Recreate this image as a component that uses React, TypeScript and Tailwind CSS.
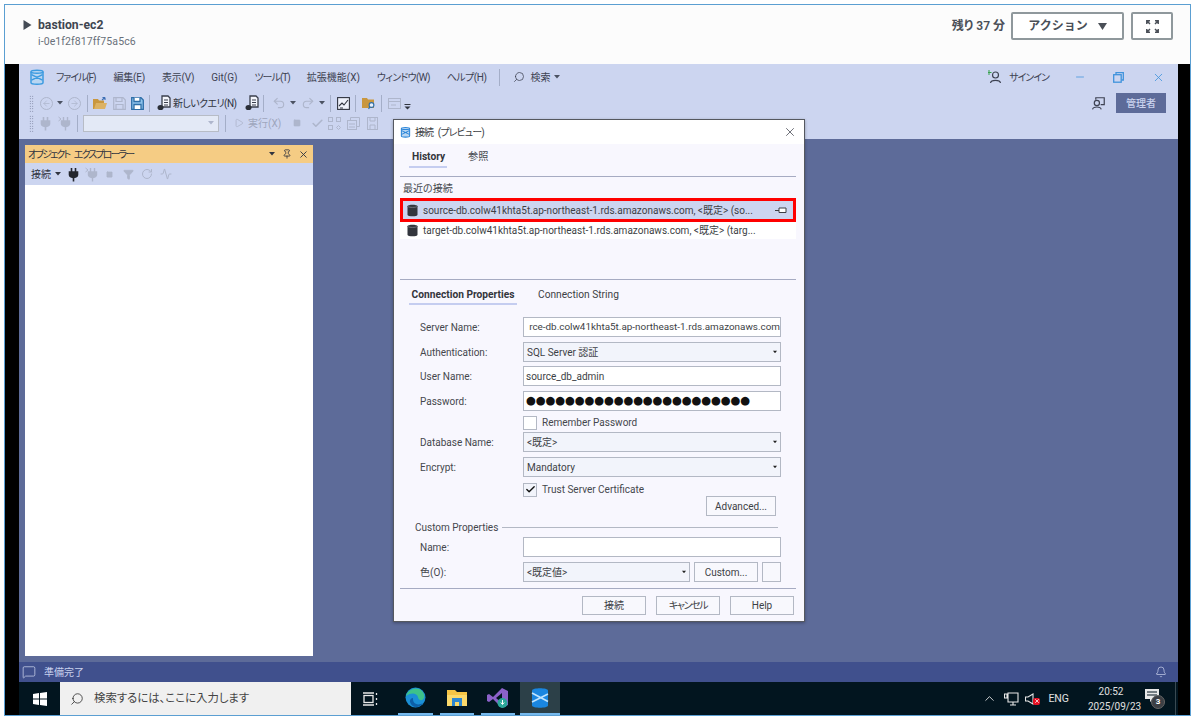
import React from "react";
import { ChevronUp, Search, X, Minus, Check, Bell, MessageSquare, Pin, RotateCw, Filter, Activity, Undo2, Redo2, Square, Play, ArrowLeft, ArrowRight } from "lucide-react";

const Logo = ({ s = 16, c = "#3d9be0" }: { s?: number; c?: string }) => (
  <svg width={s} height={s * 1.15} viewBox="0 0 16 18" fill="none">
    <path d="M2 3.5C2 1.5 14 1.5 14 3.5V14.5C14 16.5 2 16.5 2 14.5Z" stroke={c} strokeWidth="1.5" fill="#b9d6f2" />
    <path d="M2 3.5C2 5.5 14 5.5 14 3.5M2.5 6.5L13.5 12M13.5 6.5L2.5 12" stroke={c} strokeWidth="1.5" />
  </svg>
);
const Caret = ({ c = "#4b5262" }: { c?: string }) => (
  <svg width="6" height="4" viewBox="0 0 6 4" className="shrink-0"><path d="M0 0H6L3 3.5Z" fill={c} /></svg>
);
const Grip = () => (
  <div className="w-[5px] h-[17px] shrink-0 bg-[radial-gradient(#6a7290_0.7px,transparent_0.8px)] bg-[length:2.5px_2.5px]" />
);
const Sep = ({ ml }: { ml: string }) => <div className={`${ml} w-px h-[17px] bg-[#a4aec8] shrink-0`} />;
const Plug = ({ c }: { c: string }) => (
  <svg width="11" height="15" viewBox="0 0 11 15" fill="none" stroke={c} strokeWidth="1.6">
    <path d="M3.5 1V5M7.5 1V5" /><path d="M1.5 5H9.5V8C9.5 9.5 7 10.5 5.5 10.5S1.5 9.5 1.5 8Z" fill={c} /><path d="M5.5 10.5V14.5" />
  </svg>
);
const PlugX = () => (
  <svg width="13" height="15" viewBox="0 0 13 15" fill="none" stroke="#aeb6cc" strokeWidth="1.4">
    <path d="M0.5 1L3 3L0.5 5" strokeWidth="1" />
    <path d="M5.500 1V5M9.500 1V5" /><path d="M3.500 5H11.500V8C11.500 9.5 9 10.500 7.500 10.500S3.500 9.5 3.500 8Z" fill="#aeb6cc" /><path d="M7.500 10.500V14.500" />
  </svg>
);
const Doc = () => (
  <svg width="14" height="16" viewBox="0 0 14 16" fill="none">
    <path d="M5 1H11L13 3V12H5Z" fill="#f4f6fc" stroke="#3a3f4c" strokeWidth="1.3" />
    <path d="M7 5H11M7 7.5H11M7 10H11" stroke="#3a3f4c" />
    <ellipse cx="3.5" cy="12.5" rx="3" ry="2.6" fill="#2b2f38" />
  </svg>
);
const Db = () => (
  <svg width="11" height="13" viewBox="0 0 11 13" className="shrink-0">
    <path d="M0.5 2.2C0.5 0.2 10.5 0.2 10.5 2.2V10.8C10.5 12.8 0.5 12.8 0.5 10.8Z" fill="#33363d" />
    <path d="M1 2.5C2 3.7 9 3.7 10 2.5" stroke="#8a8d96" strokeWidth="0.7" fill="none" />
  </svg>
);
const Field = ({ children, cls = "" }: { children?: React.ReactNode; cls?: string }) => (
  <div className={`h-5 w-[258px] border border-[#b3b8c4] bg-white flex items-center overflow-hidden whitespace-nowrap pl-[2px] text-[10px] text-[#3d3f45] ${cls}`}>{children}</div>
);
const Select = ({ children, w = "w-[258px]" }: { children: React.ReactNode; w?: string }) => (
  <div className={`${w} h-5 border border-[#b3b8c4] bg-[#f2f4fb] flex items-center justify-between pl-[3px] pr-[2px] text-[10px] text-[#3d3f45]`}>
    <span>{children}</span><div className="scale-75"><Caret c="#222" /></div>
  </div>
);
const Row = ({ label, children, mt }: { label: string; children: React.ReactNode; mt: string }) => (
  <div className={`flex items-center ${mt}`}>
    <div className="w-[104px] pl-[1px] text-[10px] text-[#45474d]">{label}</div>
    {children}
  </div>
);
const Btn = ({ children, w, cls = "" }: { children: React.ReactNode; w: string; cls?: string }) => (
  <div className={`${w} h-[19px] border border-[#b3b8c4] bg-[#f8f8fd] flex items-center justify-center text-[10px] text-[#3d3f45] ${cls}`}>{children}</div>
);
const Menu = ({ t, ml, tr = "" }: { t: string; ml: string; tr?: string }) => <span className={`${ml} ${tr} text-[10px] text-[#3d4252] whitespace-nowrap`}>{t}</span>;

export default function App() {
  return (
    <div className="w-[1194px] h-[720px] bg-white pt-[4px] pl-[4px] pr-[3px] pb-[4px] overflow-hidden font-['Roboto','Noto_Sans_CJK_JP',sans-serif] [font-feature-settings:'palt']">
      <div className="h-full border border-[#5b9fd2] flex flex-col">
        {/* Session header */}
        <div className="h-[59px] shrink-0 bg-[#fcfcfc] flex items-start justify-between pl-[18px] pr-[17px]">
          <div className="flex items-start pt-[12px]">
            <svg width="9" height="10" viewBox="0 0 9 10" className="mt-[3px]"><path d="M0.5 0L8.5 5L0.5 10Z" fill="#444b55" /></svg>
            <div className="ml-[6px]">
              <div className="text-[12.2px] leading-[17px] font-bold text-[#3f4650]">bastion-ec2</div>
              <div className="text-[10.5px] leading-[14px] mt-[1px] text-[#69707a] tracking-[0.1px]">i-0e1f2f817ff75a5c6</div>
            </div>
          </div>
          <div className="flex items-center pt-[7px]">
            <span className="text-[12px] font-semibold text-[#4a4f57]">残り 37 分</span>
            <div className="ml-[6px] w-[113px] h-[28px] border-2 border-[#8f989c] rounded-[2px] bg-white flex items-center justify-center gap-[10px] text-[12px] font-semibold text-[#4a4f57] [font-feature-settings:normal]">
              アクション
              <svg width="9" height="7" viewBox="0 0 9 7"><path d="M0 0H9L4.5 7Z" fill="#4a4f57" /></svg>
            </div>
            <div className="ml-[7px] w-[42px] h-[28px] border-2 border-[#8f989c] rounded-[2px] bg-white flex items-center justify-center">
              <svg width="13" height="13" viewBox="0 0 13 13" fill="none" stroke="#4a4f57" strokeWidth="1.5">
                <path d="M0.8 4V0.8H4M9 0.8H12.200V4M12.200 9V12.200H9M4 12.200H0.8V9M1 1L4 4M12 1L9 4M12 12L9 9M1 12L4 9" />
              </svg>
            </div>
          </div>
        </div>

        {/* Remote desktop */}
        <div className="flex-1 min-h-0 bg-black pl-[14px] pr-[12px] flex flex-col">
          <div className="relative flex-1 min-h-0 flex flex-col bg-[#5d6b99]">
            {/* menu bar */}
            <div className="bg-[#ccd5f0] shrink-0 pb-[6px]">
              <div className="h-[26px] flex items-center pl-[10px] pr-[13px]">
                <Logo s={16} />
                <Menu t="ファイル(F)" ml="ml-[11px]" tr="tracking-[-1.1px]" />
                <Menu t="編集(E)" ml="ml-[18px]" tr="tracking-[-0.2px]" />
                <Menu t="表示(V)" ml="ml-[17px]" tr="tracking-[-0.2px]" />
                <Menu t="Git(G)" ml="ml-[17px]" />
                <Menu t="ツール(T)" ml="ml-[17px]" tr="tracking-[-1px]" />
                <Menu t="拡張機能(X)" ml="ml-[17px]" />
                <Menu t="ウィンドウ(W)" ml="ml-[17px]" tr="tracking-[-0.7px]" />
                <Menu t="ヘルプ(H)" ml="ml-[17px]" tr="tracking-[-0.5px]" />
                <div className="ml-[13px] w-px h-[17px] bg-[#a4aec8]" />
                <Search size={12} strokeWidth={1.5} color="#3d4252" className="ml-[13px] -scale-x-100" />
                <Menu t="検索" ml="ml-[5px]" />
                <div className="ml-[4px]"><Caret /></div>
                <div className="ml-auto flex items-center">
                  <svg width="14" height="14" viewBox="0 0 14 14" fill="none">
                    <path d="M1 0V5M-1 2.5H3.5" stroke="#35a04b" strokeWidth="1" />
                    <circle cx="7.5" cy="5" r="3" stroke="#3d4252" strokeWidth="1.2" />
                    <path d="M2.5 13C3 9.5 12 9.5 12.5 13" stroke="#3d4252" strokeWidth="1.2" />
                  </svg>
                  <span className="ml-[7px] text-[10px] tracking-[-1px] text-[#3d4252]">サインイン</span>
                  <Minus size={12} color="#3f93dc" strokeWidth={1.5} className="ml-[25px]" />
                  <svg width="11" height="11" viewBox="0 0 11 11" fill="none" stroke="#3f93dc" strokeWidth="1.3" className="ml-[27px]">
                    <rect x="0.7" y="2.7" width="7.5" height="7.5" /><path d="M3 2.5V0.7H10.3V8H8.5" />
                  </svg>
                  <X size={13} color="#3f93dc" strokeWidth={1.5} className="ml-[28px]" />
                </div>
              </div>
              {/* toolbar 1 */}
              <div className="h-[20px] mt-[3px] flex items-center pl-[10px] pr-[12px]">
                <Grip />
                <div className="ml-[6px] w-[13px] h-[13px] rounded-full border border-[#aeb6cc] flex items-center justify-center"><ArrowLeft size={9} color="#aeb6cc" /></div>
                <div className="ml-[4px]"><Caret /></div>
                <div className="ml-[5px] w-[13px] h-[13px] rounded-full border border-[#aeb6cc] flex items-center justify-center"><ArrowRight size={9} color="#aeb6cc" /></div>
                <Sep ml="ml-[6px]" />
                <svg width="14" height="13" viewBox="0 0 14 13" className="ml-[5px]"><path d="M0 2H5L6 3.5H11V12H0Z" fill="#c9973f" /><path d="M1 12L3 6H14L12 12Z" fill="#dcb264" /><path d="M9 3L12 0.5M12 0.5H9.5M12 .5V3" stroke="#3d6fb4" strokeWidth="1.1" fill="none" /></svg>
                <svg width="13" height="13" viewBox="0 0 13 13" fill="none" stroke="#aeb6cc" strokeWidth="1.2" className="ml-[6px]"><path d="M0.7 0.7H10L12.3 3V12.3H0.7Z" /><path d="M3 .7V4.5H9V.7M3 12V7.5H10V12" /></svg>
                <svg width="13" height="13" viewBox="0 0 13 13" fill="#8ec3ec" stroke="#2e6ea8" strokeWidth="1.3" className="ml-[5px]"><path d="M0.7 0.7H10L12.3 3V12.3H0.7Z" /><path d="M3 .7V4.5H9V.7M3 12V7.5H10V12" fill="#fff" /></svg>
                <Sep ml="ml-[5px]" />
                <div className="ml-[7px]"><Doc /></div>
                <span className="ml-[2px] w-[62px] text-[10px] tracking-[-0.6px] text-[#30343f] whitespace-nowrap">新しいクエリ(N)</span>
                <div className="ml-[10px]"><Doc /></div>
                <Sep ml="ml-[4px]" />
                <Undo2 size={14} color="#aeb6cc" className="ml-[8px]" />
                <div className="ml-[4px]"><Caret /></div>
                <Redo2 size={14} color="#aeb6cc" className="ml-[5px]" />
                <div className="ml-[4px]"><Caret /></div>
                <Sep ml="ml-[5px]" />
                <svg width="13" height="13" viewBox="0 0 13 13" fill="none" stroke="#30343f" strokeWidth="1.1" className="ml-[6px]"><rect x="0.6" y="0.6" width="11.8" height="11.8" fill="#eef1fb" /><path d="M2 9L5 6L7 8L11 3M3 11H6" /></svg>
                <Sep ml="ml-[5px]" />
                <svg width="14" height="13" viewBox="0 0 14 13" className="ml-[6px]"><path d="M0 1H5L6 2.5H12V11H0Z" fill="#c9973f" /><circle cx="9.5" cy="8" r="2.4" fill="#e9f0fb" stroke="#2e6ea8" strokeWidth="1.1" /><path d="M8 10L6.5 12" stroke="#2e6ea8" strokeWidth="1.2" /></svg>
                <Sep ml="ml-[5px]" />
                <svg width="13" height="13" viewBox="0 0 13 13" fill="none" stroke="#aeb6cc" className="ml-[6px]"><rect x="0.5" y="1.5" width="12" height="10" /><path d="M0.5 4.5H12.5M3 8H8" /></svg>
                <svg width="7" height="6" viewBox="0 0 7 6" className="ml-[3px] mt-[8px]"><path d="M0.5 0.5H6.5" stroke="#30343f" /><path d="M0.5 2.500H6.500L3.500 5.500Z" fill="#30343f" /></svg>
                <div className="ml-auto flex items-center">
                  <svg width="13" height="13" viewBox="0 0 12 12" fill="none" stroke="#3d4252" strokeWidth="1.1"><circle cx="4.5" cy="5.5" r="2.4" /><path d="M0.5 11.5C1 8.5 8 8.5 8.5 11.5M3.5 2.5V.7H11.3V7H8" /></svg>
                  <div className="ml-[11px] w-[50px] h-[20px] bg-[#5d6b99] text-[#c9d2ee] text-[10px] font-medium flex items-center justify-center">管理者</div>
                </div>
              </div>
              {/* toolbar 2 */}
              <div className="h-[20px] flex items-center pl-[10px]">
                <Grip />
                <div className="ml-[6px]"><Plug c="#aeb6cc" /></div>
                <div className="ml-[7px]"><PlugX /></div>
                <Sep ml="ml-[6px]" />
                <div className="ml-[5px] w-[136px] h-[17px] border border-[#b7bcc6] bg-[#e3e9f6] flex items-center justify-end pr-[4px]"><Caret c="#aeb6cc" /></div>
                <Sep ml="ml-[6px]" />
                <Play size={10} color="#aeb6cc" className="ml-[8px]" />
                <span className="ml-[4px] w-[32px] text-[10px] text-[#9ea6bd] whitespace-nowrap">実行(X)</span>
                <Square size={8} fill="#aeb6cc" color="#aeb6cc" className="ml-[13px]" />
                <Check size={13} color="#aeb6cc" strokeWidth={3} className="ml-[10px]" />
                <svg width="13" height="13" viewBox="0 0 13 13" fill="none" stroke="#aeb6cc" className="ml-[4px]"><rect x="0.5" y="0.5" width="4" height="4" /><rect x="8.5" y="0.5" width="4" height="4" /><rect x="0.5" y="8.5" width="4" height="4" /><path d="M8.5 10.5L10.5 8.5L12.5 10.5L10.5 12.5Z" /></svg>
                <svg width="13" height="13" viewBox="0 0 13 13" fill="none" stroke="#aeb6cc" className="ml-[6px]"><rect x="0.5" y="3.5" width="9" height="9" /><path d="M3.5 3.5V.5H12.5V9.5H9.5M2 7H8M2 10H8" /></svg>
                <svg width="11" height="13" viewBox="0 0 11 13" fill="none" stroke="#aeb6cc" className="ml-[7px]"><rect x="0.5" y="0.5" width="10" height="12" /><path d="M3 .5V4H8V.5M3 12V8H8V12" /></svg>
              </div>
            </div>

            {/* document area */}
            <div className="flex-1 min-h-0 pl-[6px] pt-[6px] pb-[6px]">
              <div className="w-[288px] h-full flex flex-col">
                <div className="h-[18px] shrink-0 bg-[#f5cc84] flex items-center pl-[3px] pr-[4px] text-[10px] text-[#30343f]">
                  <span className="tracking-[-1.9px] [word-spacing:4px]">オブジェクト エクスプローラー</span>
                  <div className="ml-auto"><Caret c="#30343f" /></div>
                  <Pin size={10} color="#30343f" className="ml-[7px]" />
                  <X size={11} color="#30343f" className="ml-[6px]" />
                </div>
                <div className="h-[22px] shrink-0 bg-[#ccd5f0] flex items-center pl-[6px]">
                  <span className="text-[10px] text-[#30343f]">接続</span>
                  <div className="ml-[4px]"><Caret c="#30343f" /></div>
                  <div className="ml-[7px]"><Plug c="#23262e" /></div>
                  <div className="ml-[6px]"><PlugX /></div>
                  <Square size={7} fill="#aeb6cc" color="#aeb6cc" className="ml-[8px]" />
                  <Filter size={11} fill="#aeb6cc" color="#aeb6cc" className="ml-[10px]" />
                  <RotateCw size={12} color="#aeb6cc" className="ml-[7px]" />
                  <Activity size={12} color="#aeb6cc" className="ml-[7px]" />
                </div>
                <div className="flex-1 bg-white" />
              </div>
            </div>

            {/* status bar */}
            <div className="h-[20px] shrink-0 bg-[#40508d] flex items-center pl-[3px] pr-[11px]">
              <MessageSquare size={14} color="#d5dcf2" strokeWidth={1.2} />
              <span className="ml-[8px] text-[10px] text-[#c9d2ee]">準備完了</span>
              <Bell size={12} color="#d5dcf2" strokeWidth={1.3} className="ml-auto" />
            </div>

            {/* Connect dialog */}
            <div className="absolute left-[374px] top-[55px] w-[412px] h-[503px] bg-[#f8f7fe] border border-[#55585f] flex flex-col shadow-[0_1px_3px_rgba(0,0,0,0.3)]">
              <div className="h-[24px] shrink-0 bg-white flex items-center pl-[6px] pr-[7px]">
                <Logo s={11} c="#2c86d8" />
                <span className="ml-[4px] text-[10px] tracking-[-0.9px] [word-spacing:3px] text-[#3d3f45]">接続 (プレビュー)</span>
                <X size={14} strokeWidth={1.2} color="#30343f" className="ml-auto" />
              </div>
              <div className="h-[33px] shrink-0 ml-[6px] mr-[8px] border-b border-[#a6abc2] flex items-start pl-[9px] pt-[5px] gap-[21px] text-[10.2px] text-[#45474d]">
                <div className="font-bold text-[#33353b] w-[38px] h-[24px] leading-[15px]"><span className="pl-[3px]">History</span><div className="h-[2px] w-[38px] bg-[#c5cdf0] mt-[2px]" /></div>
                <span className="leading-[15px]">参照</span>
              </div>
              <div className="pl-[9px] mt-[5px] text-[10px] leading-[14px] text-[#45474d]">最近の接続</div>
              <div className="ml-[6px] mr-[8px] mt-[2px] h-[24px] border-[3px] border-[#f00] bg-[#ccd5f0] flex items-center pl-[4px] pr-[6px] text-[10px] text-[#3d3f45] whitespace-nowrap">
                <Db />
                <span className="ml-[5px]">source-db.colw41khta5t.ap-northeast-1.rds.amazonaws.com, &lt;既定&gt; (so...</span>
                <svg width="12" height="7" viewBox="0 0 12 7" className="ml-auto"><path d="M0 3.5H4M4 1H11V5.5H4Z" stroke="#3d3f45" fill="#fff" /></svg>
              </div>
              <div className="ml-[6px] mr-[8px] h-[17px] bg-white flex items-center pl-[7px] text-[10px] text-[#3d3f45] whitespace-nowrap">
                <Db />
                <span className="ml-[5px]">target-db.colw41khta5t.ap-northeast-1.rds.amazonaws.com, &lt;既定&gt; (targ...</span>
              </div>
              <div className="ml-[6px] mr-[8px] mt-[40px] h-px bg-[#a6abc2] shrink-0" />
              <div className="ml-[15px] mt-[7px] flex items-start gap-[21px] text-[10.2px] leading-[15px]">
                <div className="w-[108px] font-bold text-[#33353b] text-center whitespace-nowrap">Connection Properties<div className="h-[2px] bg-[#c5cdf0] mt-[1px]" /></div>
                <span className="text-[#3d3f45]">Connection String</span>
              </div>
              <div className="pl-[25px] mt-[12px]">
                <Row label="Server Name:" mt="">
                  <Field cls="justify-end"><span className="text-[9.9px]">rce-db.colw41khta5t.ap-northeast-1.rds.amazonaws.com</span></Field>
                </Row>
                <Row label="Authentication:" mt="mt-[5px]"><Select>SQL Server 認証</Select></Row>
                <Row label="User Name:" mt="mt-[4px]"><Field>source_db_admin</Field></Row>
                <Row label="Password:" mt="mt-[5px]">
                  <Field><span className="text-[11.4px] leading-none text-[#111] tracking-[-0.2px] font-['DejaVu_Sans',sans-serif]">●●●●●●●●●●●●●●●●●●●●●●●</span></Field>
                </Row>
                <div className="flex items-center mt-[4px] ml-[104px] h-[15px]">
                  <div className="w-[14px] h-[14px] border border-[#b3b8c4] bg-white" />
                  <span className="ml-[5px] text-[10px] text-[#45474d]">Remember Password</span>
                </div>
                <Row label="Database Name:" mt="mt-[2px]"><Select>&lt;既定&gt;</Select></Row>
                <Row label="Encrypt:" mt="mt-[5px]"><Select>Mandatory</Select></Row>
                <div className="flex items-center mt-[5px] ml-[104px] h-[15px]">
                  <div className="w-[14px] h-[14px] border border-[#b3b8c4] bg-[#f2f4fb] flex items-center justify-center"><Check size={11} strokeWidth={3} color="#111" /></div>
                  <span className="ml-[5px] text-[10px] text-[#45474d]">Trust Server Certificate</span>
                </div>
                <div className="flex justify-end pr-[28px] -mt-[1px]"><Btn w="w-[70px]" cls="h-[20px]">Advanced...</Btn></div>
                <div className="flex items-center -ml-[4px] mt-[4px] h-[15px] pr-[26px]">
                  <span className="text-[10px] text-[#45474d] whitespace-nowrap">Custom Properties</span>
                  <div className="ml-[4px] flex-1 h-px bg-[#b3b8c4]" />
                </div>
                <Row label="Name:" mt="mt-[2px]"><Field /></Row>
                <Row label="色(O):" mt="mt-[5px]">
                  <Select w="w-[167px]">&lt;既定値&gt;</Select>
                  <Btn w="w-[64px]" cls="ml-[4px] h-[20px]">Custom...</Btn>
                  <div className="ml-[4px] w-[19px] h-[20px] border border-[#b3b8c4] bg-[#f8f8fd]" />
                </Row>
              </div>
              <div className="ml-[6px] mr-[8px] mt-[6px] h-px bg-[#a6abc2] shrink-0" />
              <div className="flex justify-end gap-[10px] pr-[10px] mt-[7px]">
                <Btn w="w-[64px]" cls="border-[#5a9fd4]">接続</Btn>
                <Btn w="w-[64px]"><span className="tracking-[-1.4px]">キャンセル</span></Btn>
                <Btn w="w-[64px]">Help</Btn>
              </div>
            </div>
          </div>

          {/* Taskbar */}
          <div className="h-[33px] shrink-0 bg-[#02151f] flex items-stretch">
            <div className="w-[41px] flex items-center justify-center">
              <svg width="14" height="14" viewBox="0 0 14 14" fill="#fff"><path d="M0 2L6 1.1V6.6H0ZM7 1L14 0V6.6H7ZM0 7.4H6V12.9L0 12ZM7 7.4H14V14L7 13Z" /></svg>
            </div>
            <div className="w-[291px] bg-[#f0f0f0] flex items-center pl-[10px]">
              <Search size={14} strokeWidth={1.3} color="#222" className="-scale-x-100" />
              <span className="ml-[10px] text-[11.4px] mt-[1px] text-[#444]">検索するには、ここに入力します</span>
            </div>
            <div className="ml-[12px] flex items-center w-[16px]">
              <svg width="15" height="14" viewBox="0 0 15 14" fill="none" stroke="#e8e8e8" strokeWidth="1.3"><rect x="1" y="3.5" width="9" height="7" /><path d="M0 1H11M0 13H11M13.5 1V3M13.5 6V8M13.5 11V13" /></svg>
            </div>
            <div className="ml-[19px] w-[35px] flex items-center justify-center border-b-2 border-[#76b9ed]">
              <svg width="21" height="21" viewBox="0 0 21 21">
                <circle cx="10.5" cy="10.5" r="10" fill="#1b8fd6" />
                <path d="M1 9C3 2 12 -1 17 4C20 7 20 12 17 13C14 14 13 11 13 10C12 6 6 5 1 9Z" fill="#3dc28a" />
                <path d="M8 12C8 17 13 19 18 16C15 21 7 22 5 15C4.500 13 6 11 8 11Z" fill="#0d5fa8" />
              </svg>
            </div>
            <div className="ml-[7px] w-[34px] flex items-center justify-center border-b-2 border-[#76b9ed]">
              <svg width="20" height="18" viewBox="0 0 20 18"><path d="M0 1H8L10 3H20V17H0Z" fill="#f5c445" /><path d="M0 6H20V17H0Z" fill="#fbd96b" /><rect x="5" y="9" width="10" height="8" fill="#2d86d0" /><rect x="8" y="13" width="4" height="4" fill="#fbd96b" /></svg>
            </div>
            <div className="ml-[7px] w-[34px] flex items-center justify-center border-b-2 border-[#76b9ed]">
              <svg width="22" height="22" viewBox="0 0 22 22"><path d="M15 1L21 4V18L15 21L6 12L2 15L0 14V8L2 7L6 10Z" fill="#8b61c9" /><path d="M15 6V16L9 11Z" fill="#02151f" /><circle cx="15.500" cy="16" r="5" fill="#2ba79a" /><path d="M15.500 13V17M13.800 15.500L15.500 17.500L17.200 15.500" stroke="#fff" fill="none" /></svg>
            </div>
            <div className="ml-[5px] w-[40px] bg-[#2c4048] flex items-center justify-center border-b-2 border-[#76b9ed]">
              <svg width="18" height="22" viewBox="0 0 18 22" fill="none">
                <path d="M1 3.500C1 .5 17 .5 17 3.500V18.500C17 21.500 1 21.500 1 18.500Z" fill="#1a86e0" />
                <path d="M1 6L17 14.500M17 7L1 15" stroke="#bfe4ff" strokeWidth="1.6" />
              </svg>
            </div>
            <div className="ml-auto flex items-center pr-[2px]">
              <ChevronUp size={15} strokeWidth={1.4} color="#e8e8e8" />
              <svg width="15" height="14" viewBox="0 0 15 14" fill="none" stroke="#e8e8e8" strokeWidth="1.1" className="ml-[7px]"><path d="M4 1H14V10H4ZM9 10V13M6 13H12M0.500 2H3V6H0.500Z" /></svg>
              <div className="ml-[6px] flex items-center">
                <svg width="9" height="12" viewBox="0 0 9 12" fill="none" stroke="#e8e8e8" strokeWidth="1.1"><path d="M0.500 4H3L8 1V11L3 8H0.500Z" /></svg>
                <div className="w-[7px] h-[7px] rounded-[2px] bg-[#e81123] mt-[5px] -ml-[1px] flex items-center justify-center"><X size={6} strokeWidth={3} color="#fff" /></div>
              </div>
              <span className="ml-[8px] text-[10.5px] text-[#e0e0e0]">ENG</span>
              <div className="ml-[19px] w-[46px] text-center text-[10px] leading-[15px] text-[#e0e0e0]">20:52<br /><span className="whitespace-nowrap">2025/09/23</span></div>
              <div className="ml-[11px] relative w-[20px] h-[20px]">
                <svg width="14" height="14" viewBox="0 0 14 14" fill="#e8e8e8"><path d="M0 0H14V10H8L5 13V10H0Z" /><path d="M2 3H12M2 6H12" stroke="#02151f" /></svg>
                <div className="absolute left-[6px] top-[6px] w-[14px] h-[14px] rounded-full bg-[#3c3f44] border border-[#666] text-white text-[8px] font-bold flex items-center justify-center">3</div>
              </div>
              <div className="ml-[10px] w-px h-[33px] bg-[#3a4a52]" />
            </div>
          </div>
        </div>
      </div>
    </div>
  );
}
